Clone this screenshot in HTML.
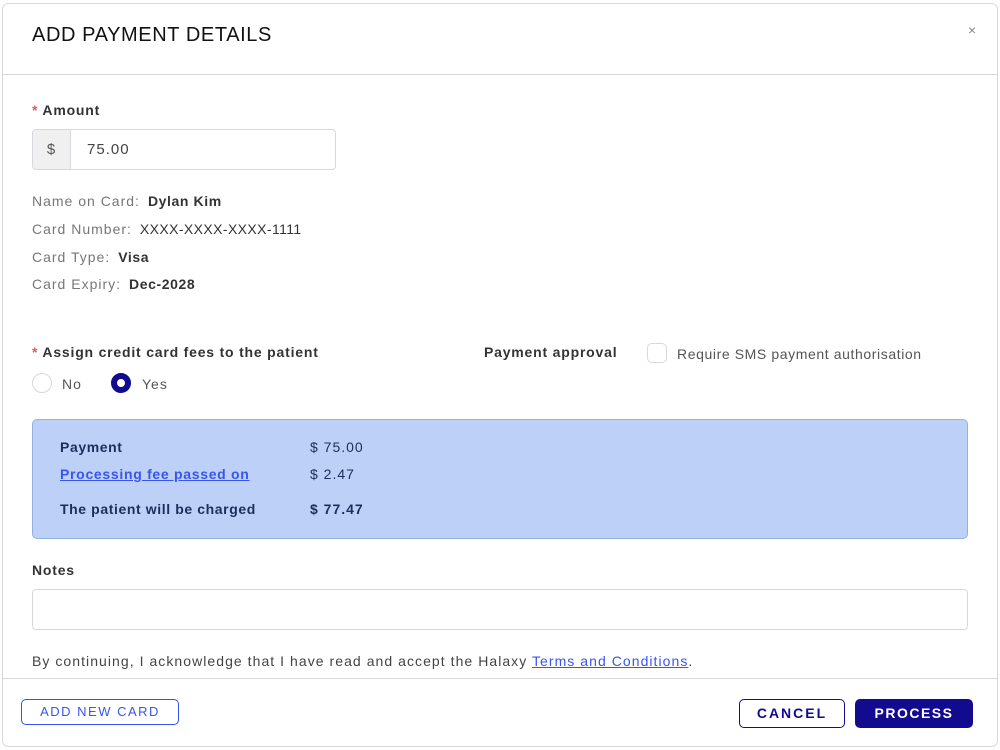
<!DOCTYPE html>
<html><head><meta charset="utf-8"><style>
*{box-sizing:border-box;margin:0;padding:0}
body{width:1000px;height:750px;background:#fff;font-family:"Liberation Sans",sans-serif;position:relative;overflow:hidden;color:#333;letter-spacing:1px}
.a{position:absolute;white-space:nowrap}
.dlg{position:absolute;left:2px;top:3px;width:996px;height:744px;border:1px solid #d6d8dd;border-radius:6px}
.lbl{font-size:14px;font-weight:bold;color:#333;letter-spacing:0.8px}
.g{color:#777;font-size:14px}
.v{color:#333;font-size:14px;font-weight:bold;margin-left:8px;letter-spacing:0.6px}
.req{color:#e05a5a}
</style></head><body>
<div class="dlg"></div>
<div class="a" style="left:32px;top:24px;font-size:20px;color:#111;letter-spacing:0.6px">ADD PAYMENT DETAILS</div>
<div class="a" style="left:968px;top:22px;font-size:14px;color:#888">×</div>
<div class="a" style="left:3px;top:74px;width:994px;height:1px;background:#d6d8dd"></div>

<div class="a lbl" style="left:32px;top:102px"><span class="req">*</span> Amount</div>
<div class="a" style="left:32px;top:129px;width:304px;height:41px;border:1px solid #d6d8dd;border-radius:4px;overflow:hidden">
 <div style="position:absolute;left:0;top:0;width:38px;height:39px;background:#f0f0f0;border-right:1px solid #d6d8dd;text-align:center;line-height:39px;font-size:15px;color:#555">$</div>
 <div style="position:absolute;left:54px;top:0;line-height:39px;font-size:15px;color:#444">75.00</div>
</div>
<div class="a g" style="left:32px;top:193px">Name on Card:<span class="v">Dylan Kim</span></div>
<div class="a g" style="left:32px;top:221px">Card Number:<span class="v" style="font-weight:normal;letter-spacing:0.4px">XXXX-XXXX-XXXX-1111</span></div>
<div class="a g" style="left:32px;top:249px">Card Type:<span class="v">Visa</span></div>
<div class="a g" style="left:32px;top:276px">Card Expiry:<span class="v">Dec-2028</span></div>

<div class="a lbl" style="left:32px;top:344px"><span class="req">*</span> Assign credit card fees to the patient</div>
<div class="a" style="left:32px;top:373px;width:20px;height:20px;border:1px solid #d6d8dd;border-radius:50%"></div>
<div class="a" style="left:62px;top:376px;font-size:14px;color:#555">No</div>
<div class="a" style="left:111px;top:373px;width:20px;height:20px;border:6px solid #120a8f;border-radius:50%;background:#fff"></div>
<div class="a" style="left:142px;top:376px;font-size:14px;color:#555">Yes</div>

<div class="a lbl" style="left:484px;top:344px">Payment approval</div>
<div class="a" style="left:647px;top:343px;width:20px;height:20px;border:1px solid #d6d8dd;border-radius:5px"></div>
<div class="a" style="left:677px;top:346px;font-size:14px;color:#555;letter-spacing:0.6px">Require SMS payment authorisation</div>

<div class="a" style="left:32px;top:419px;width:936px;height:120px;background:#bdd0f8;border:1px solid #94b0e0;border-radius:5px"></div>
<div class="a" style="left:60px;top:439px;font-size:14px;font-weight:bold;color:#1a2f5c;letter-spacing:0.6px">Payment</div>
<div class="a" style="left:310px;top:439px;font-size:14px;color:#1a2f5c">$ 75.00</div>
<div class="a" style="left:60px;top:466px;font-size:14px;font-weight:bold;color:#3a55ee;text-decoration:underline;letter-spacing:0.7px">Processing fee passed on</div>
<div class="a" style="left:310px;top:466px;font-size:14px;color:#1a2f5c">$ 2.47</div>
<div class="a" style="left:60px;top:501px;font-size:14px;font-weight:bold;color:#1a2f5c;letter-spacing:0.6px">The patient will be charged</div>
<div class="a" style="left:310px;top:501px;font-size:14px;font-weight:bold;color:#1a2f5c">$ 77.47</div>

<div class="a lbl" style="left:32px;top:562px">Notes</div>
<div class="a" style="left:32px;top:589px;width:936px;height:41px;border:1px solid #d6d8dd;border-radius:4px"></div>
<div class="a" style="left:32px;top:653px;font-size:14px;color:#444;letter-spacing:1.05px">By continuing, I acknowledge that I have read and accept the Halaxy <span style="color:#3a55ee;text-decoration:underline">Terms and Conditions</span>.</div>
<div class="a" style="left:3px;top:678px;width:994px;height:1px;background:#d6d8dd"></div>

<div class="a" style="left:21px;top:699px;width:158px;height:26px;border:1px solid #3a55ee;border-radius:5px;color:#3a55ee;font-size:13px;letter-spacing:1.5px;text-align:center;line-height:24px">ADD NEW CARD</div>
<div class="a" style="left:739px;top:699px;width:106px;height:29px;border:1px solid #120a8f;border-radius:5px;color:#120a8f;font-size:14px;font-weight:bold;letter-spacing:2px;text-align:center;line-height:27px">CANCEL</div>
<div class="a" style="left:855px;top:699px;width:118px;height:29px;background:#120a8f;border-radius:5px;color:#fff;font-size:14px;font-weight:bold;letter-spacing:1.5px;text-align:center;line-height:29px">PROCESS</div>
</body></html>
